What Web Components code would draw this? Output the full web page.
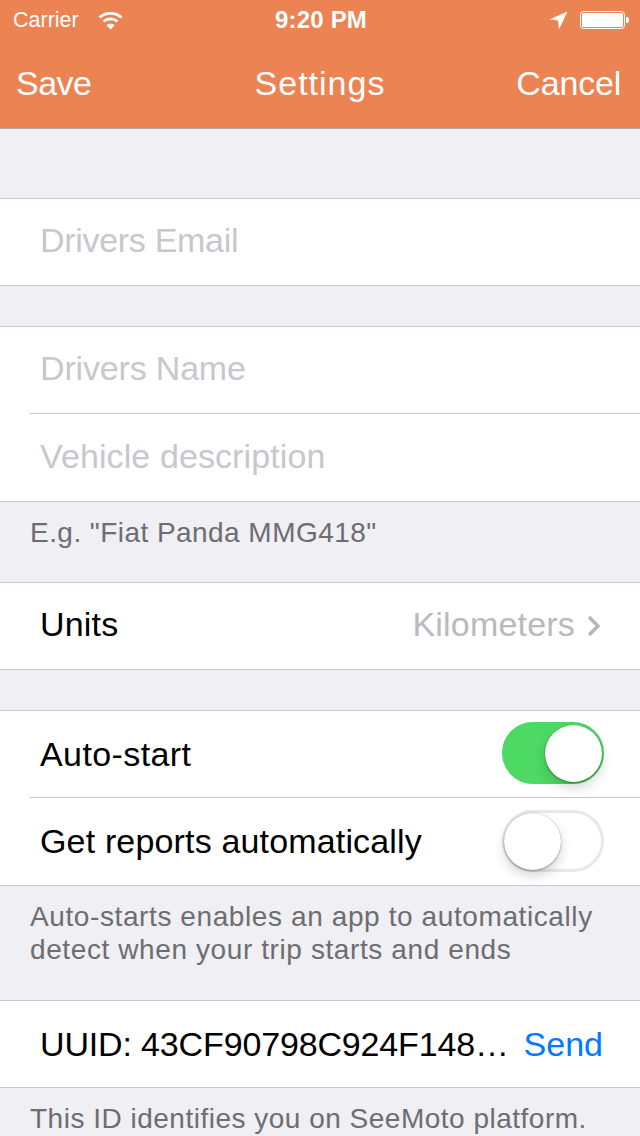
<!DOCTYPE html>
<html>
<head>
<meta charset="utf-8">
<title>Settings</title>
<style>
  html, body { margin: 0; padding: 0; }
  body { width: 640px; height: 1136px; overflow: hidden; background: #efeff4; font-family: "Liberation Sans", Arial, sans-serif; }
</style>
</head>
<body>
<settings-screen></settings-screen>
<script>
// STATUS BAR
class StatusBar extends HTMLElement {
  connectedCallback() {
    this.attachShadow({ mode: 'open' }).innerHTML = `
<style>
  :host { display: grid; grid-template-columns: 1fr auto 1fr; align-items: center; height: 40px; padding: 0 11px 0 13px; color: #fff; font-size: 21.5px; letter-spacing: 0; box-sizing: border-box; }
  .left, .right { display: flex; align-items: center; }
  .left { gap: 19px; }
  .right { justify-content: flex-end; gap: 12px; }
  .time { font-size: 24px; font-weight: 700; letter-spacing: 0.2px; }
  svg { display: block; }
</style>
<div class="left"><span>Carrier</span>
  <svg width="25" height="19" viewBox="0 0 25 19" fill="none" stroke="#fff" stroke-width="2.6">
    <path d="M1.5 6.5C7.5 1 17.5 1 23.5 6.5"/>
    <path d="M5.5 10.5C9.5 7 15.5 7 19.5 10.5"/>
    <path d="M12.5 18.5L8.5 14.2C10.5 12.4 14.5 12.4 16.5 14.2Z" fill="#fff" stroke="none"/>
  </svg>
</div>
<div class="time">9:20 PM</div>
<div class="right">
  <svg width="19" height="19" viewBox="0 0 19 19"><path d="M18.5 0.5L0.5 8.5L9 9.5L10 18.5Z" fill="#fff"/></svg>
  <svg width="49" height="20" viewBox="0 0 49 20">
    <rect x="0.5" y="1.5" width="44" height="17" rx="3" fill="none" stroke="#fff"/>
    <rect x="2" y="3" width="41" height="14" rx="1.5" fill="#fff"/>
    <path d="M46 7h1a2 2 0 0 1 2 2v2a2 2 0 0 1-2 2h-1Z" fill="#fff"/>
  </svg>
</div>`;
  }
}
customElements.define('status-bar', StatusBar);

// NAV BAR
class NavBar extends HTMLElement {
  connectedCallback() {
    this.attachShadow({ mode: 'open' }).innerHTML = `
<style>
  :host { display: block; background: #ec8353; border-bottom: 1px solid #a9a9a9; }
  .bar { display: grid; grid-template-columns: 1fr auto 1fr; align-items: center; height: 88px; padding: 0 19px 0 16px; color: #fff; font-size: 34px; box-sizing: border-box; }
  .bar div { padding-bottom: 2px; }
  .start { letter-spacing: -0.5px; }
  .title { letter-spacing: 1px; padding-left: 3px; }
  .end { text-align: right; letter-spacing: -0.2px; }
</style>
<status-bar></status-bar>
<div class="bar">
  <div class="start">${this.getAttribute('left')}</div>
  <div class="title">${this.getAttribute('title')}</div>
  <div class="end">${this.getAttribute('right')}</div>
</div>`;
  }
}
customElements.define('nav-bar', NavBar);

// GROUP OF ROWS
class RowGroup extends HTMLElement {
  connectedCallback() {
    this.attachShadow({ mode: 'open' }).innerHTML = `
<style>
  :host { display: block; background: #fff; border-top: 1px solid #c8c7cc; border-bottom: 1px solid #c8c7cc; }
  ::slotted(form-row:not(:last-child)) { border-bottom: 1px solid #c8c7cc; }
</style>
<slot></slot>`;
  }
}
customElements.define('row-group', RowGroup);

// ONE ROW
class FormRow extends HTMLElement {
  connectedCallback() {
    this.attachShadow({ mode: 'open' }).innerHTML = `
<style>
  :host { display: block; margin-left: 30px; }
  :host(:nth-child(2)) .row { height: 87px; }
  .row { display: flex; align-items: center; justify-content: space-between; height: 86px; padding: 0 37px 0 10px; font-size: 34px; color: #000; box-sizing: border-box; }
  .text { white-space: nowrap; padding-bottom: var(--lift, 0); }
  :host([placeholder]) .text { color: #c7c7cd; }
</style>
<div class="row"><span class="text"><slot></slot></span><slot name="end"></slot></div>`;
  }
}
customElements.define('form-row', FormRow);

// DISCLOSURE VALUE
class RowValue extends HTMLElement {
  connectedCallback() {
    this.attachShadow({ mode: 'open' }).innerHTML = `
<style>
  :host { display: flex; align-items: center; gap: 12px; color: #b9b9be; font-size: 34px; margin-right: 2px; }
  span { padding-bottom: 4px; }
  svg { display: block; }
</style>
<span><slot></slot></span>
<svg width="14" height="22" viewBox="0 0 14 22" fill="none" stroke="#b5b5ba" stroke-width="3.4"><path d="M2 2L11 11L2 20"/></svg>`;
  }
}
customElements.define('row-value', RowValue);

// SWITCH
class ToggleSwitch extends HTMLElement {
  connectedCallback() {
    this.attachShadow({ mode: 'open' }).innerHTML = `
<style>
  :host { display: block; width: 102px; height: 62px; box-sizing: border-box; border-radius: 31px; border: 3px solid #e8e8e8; background: #fff; position: relative; margin: 0 -1px 2px 0; }
  :host([on]) { background: #4cd964; border-color: #4cd964; }
  .knob { position: absolute; top: 0; left: -1px; width: 57px; height: 57px; border-radius: 50%; background: #fff; box-shadow: 0 6px 12px rgba(0,0,0,.16), 0 1px 2px rgba(0,0,0,.3), 0 0 1px rgba(0,0,0,.3); }
  :host([on]) .knob { left: auto; right: -1px; }
</style>
<div class="knob"></div>`;
  }
}
customElements.define('toggle-switch', ToggleSwitch);

// FOOTER NOTE
class GroupNote extends HTMLElement {
  connectedCallback() {
    this.attachShadow({ mode: 'open' }).innerHTML = `
<style>
  :host { display: block; padding: 14px 30px 0; font-size: 28px; line-height: 33px; letter-spacing: 0.5px; color: #6d6d72; }
</style>
<slot></slot>`;
  }
}
customElements.define('group-note', GroupNote);

// WHOLE SCREEN
class SettingsScreen extends HTMLElement {
  connectedCallback() {
    this.attachShadow({ mode: 'open' }).innerHTML = `
<style>
  :host { display: block; }
  .gap-69 { height: 69px; }
  .gap-40 { height: 40px; }
  .note-1 { height: 80px; box-sizing: border-box; letter-spacing: 0.45px; }
  .note-2 { height: 114px; box-sizing: border-box; letter-spacing: 0.6px; }
  .uuid { color: #007aff; }
  form-row { --lift: 0px; }
  .up { --lift: 4px; }
  .email { letter-spacing: -0.3px; }
  .name { letter-spacing: -0.17px; }
  .vehicle { letter-spacing: 0.1px; --lift: 2px; }
  .units { letter-spacing: 0.2px; }
  .auto { letter-spacing: 0.4px; }
  .reports { letter-spacing: 0.16px; }
  .uuid-row { letter-spacing: -0.15px; }
  .uuid-row .uuid { letter-spacing: 0; }
</style>
<nav-bar left="Save" title="Settings" right="Cancel"></nav-bar>
<div class="gap-69"></div>
<row-group><form-row class="email up" placeholder>Drivers Email</form-row></row-group>
<div class="gap-40"></div>
<row-group>
  <form-row class="name up" placeholder>Drivers Name</form-row>
  <form-row class="vehicle" placeholder>Vehicle description</form-row>
</row-group>
<group-note class="note-1">E.g. "Fiat Panda MMG418"</group-note>
<row-group><form-row class="units up">Units<row-value slot="end">Kilometers</row-value></form-row></row-group>
<div class="gap-40"></div>
<row-group>
  <form-row class="auto">Auto-start<toggle-switch slot="end" on></toggle-switch></form-row>
  <form-row class="reports">Get reports automatically<toggle-switch slot="end"></toggle-switch></form-row>
</row-group>
<group-note class="note-2">Auto-starts enables an app to automatically detect when your trip starts and ends</group-note>
<row-group><form-row class="uuid-row">UUID: 43CF90798C924F148…<span class="uuid" slot="end">Send</span></form-row></row-group>
<group-note>This ID identifies you on SeeMoto platform.</group-note>`;
  }
}
customElements.define('settings-screen', SettingsScreen);
</script>
</body>
</html>
